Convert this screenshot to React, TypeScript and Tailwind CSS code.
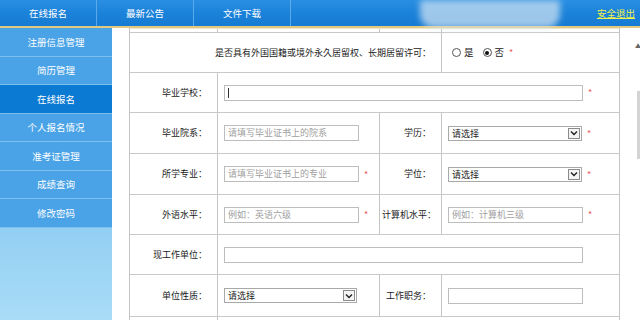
const navItems = ['在线报名', '最新公告', '文件下载']

const sideItems = ['注册信息管理', '简历管理', '在线报名', '个人报名情况', '准考证管理', '成绩查询', '修改密码']

function Star() {
  return <span className="ml-[5px] text-[9px] leading-none text-[#ee5a5c]">*</span>
}

function TextBox({ placeholder, width, star }: { placeholder?: string; width: string; star?: boolean }) {
  return (
    <div className="flex items-center">
      <div
        className={`${width} h-[16px] border border-[#bdbdbd] bg-white px-[3px] text-[9px] leading-[14px] text-[#a0a0a0]`}
      >
        {placeholder}
      </div>
      {star && <Star />}
    </div>
  )
}

function SelectBox({ width, star }: { width: string; star?: boolean }) {
  return (
    <div className="flex items-center">
      <div
        className={`${width} h-[15px] border border-[#a9a9a9] bg-white flex items-center justify-between pl-[3px] pr-[1px]`}
      >
        <span className="text-[9px] leading-none text-[#222]">请选择</span>
        <span className="w-[12px] h-[11px] border border-[#8a8a8a] bg-[#f4f4f4] flex items-center justify-center">
          <svg width="8" height="6" viewBox="0 0 8 6">
            <path d="M1 1.5 L4 4.5 L7 1.5" fill="none" stroke="#222" strokeWidth="1.4" />
          </svg>
        </span>
      </div>
      {star && <Star />}
    </div>
  )
}

function Label({ text }: { text: string }) {
  return (
    <div className="h-full flex items-center justify-end pr-[10px] text-[9px] text-[#1a1a1a] border-r border-[#c4c4c4]">
      {text}
    </div>
  )
}

function Radio({ checked }: { checked?: boolean }) {
  return (
    <span className="w-[9px] h-[9px] rounded-full border border-[#555] bg-white flex items-center justify-center">
      {checked && <span className="w-[4px] h-[4px] rounded-full bg-[#111]" />}
    </span>
  )
}

export default function App() {
  return (
    <div className="relative w-[640px] h-[322px] overflow-hidden bg-white font-['Noto_Sans_CJK_SC','Liberation_Sans',sans-serif]">
      {/* top bar */}
      <div className="h-[28px] flex bg-gradient-to-b from-[#2a8fe2] via-[#1b82da] to-[#167bd2] border-b-2 border-[#e3c980]">
        {navItems.map((item) => (
          <div
            key={item}
            className="w-[97px] h-full flex items-center justify-center text-[9.5px] text-white border-r border-[#5aa9ea]"
          >
            {item}
          </div>
        ))}
        <div className="flex-1" />
        <a className="self-center mr-[5px] text-[9.5px] text-[#eef24a] underline">安全退出</a>
      </div>

      {/* blurred overlay */}
      <div className="absolute left-[420px] top-[0px] w-[140px] h-[28px] rounded-b-[14px] bg-[#d6e6f2]/70 blur-[3px]" />

      <div className="flex h-[292px]">
        {/* sidebar */}
        <div className="w-[112px] flex flex-col bg-gradient-to-b from-[#5fb2ec] to-[#a9dcf6]">
          {sideItems.map((item, i) => (
            <div
              key={item}
              className={`h-[28.5px] flex items-center justify-center text-[9.5px] text-white border-b border-[#7cc0f0] ${
                i === 2 ? 'bg-[#0a7ad2]' : 'bg-[#4aa3e6]'
              }`}
            >
              {item}
            </div>
          ))}
        </div>

        <div className="w-[17px]" />

        {/* form table */}
        <div className="w-[491px] border-l border-r border-[#c4c4c4] flex flex-col">
          <div className="h-[5px] shrink-0 grid grid-cols-[88px_162px_62px_177px] border-t border-b border-[#c9c9c9] border-t-[#efe6c6]">
            <div className="border-r border-[#c4c4c4]" />
            <div className="border-r border-[#c4c4c4]" />
            <div className="border-r border-[#c4c4c4]" />
            <div />
          </div>

          <div className="h-[40px] shrink-0 grid grid-cols-[312px_177px] border-b border-[#c9c9c9]">
            <Label text="是否具有外国国籍或境外永久居留权、长期居留许可：" />
            <div className="flex items-center pl-[10px] text-[9.5px] text-[#222]">
              <Radio />
              <span className="ml-[3px]">是</span>
              <span className="ml-[9px]" />
              <Radio checked />
              <span className="ml-[3px]">否</span>
              <Star />
            </div>
          </div>

          <div className="h-[40px] shrink-0 grid grid-cols-[88px_401px] border-b border-[#c9c9c9]">
            <Label text="毕业学校：" />
            <div className="flex items-center pl-[6px]">
              <div className="w-[359px] h-[16px] border border-[#bdbdbd] bg-white flex items-center pl-[3px]">
                <span className="w-px h-[10px] bg-[#333]" />
              </div>
              <Star />
            </div>
          </div>

          <div className="h-[41px] shrink-0 grid grid-cols-[88px_162px_62px_177px] border-b border-[#c9c9c9]">
            <Label text="毕业院系：" />
            <div className="flex items-center pl-[6px] border-r border-[#c4c4c4]">
              <TextBox width="w-[135px]" placeholder="请填写毕业证书上的院系" />
            </div>
            <Label text="学历：" />
            <div className="flex items-center pl-[6px]">
              <SelectBox width="w-[134px]" star />
            </div>
          </div>

          <div className="h-[41px] shrink-0 grid grid-cols-[88px_162px_62px_177px] border-b border-[#c9c9c9]">
            <Label text="所学专业：" />
            <div className="flex items-center pl-[6px] border-r border-[#c4c4c4]">
              <TextBox width="w-[135px]" placeholder="请填写毕业证书上的专业" star />
            </div>
            <Label text="学位：" />
            <div className="flex items-center pl-[6px]">
              <SelectBox width="w-[134px]" star />
            </div>
          </div>

          <div className="h-[40px] shrink-0 grid grid-cols-[88px_162px_62px_177px] border-b border-[#c9c9c9]">
            <Label text="外语水平：" />
            <div className="flex items-center pl-[6px] border-r border-[#c4c4c4]">
              <TextBox width="w-[135px]" placeholder="例如：英语六级" star />
            </div>
            <div className="h-full flex items-center justify-end pr-[5px] text-[9px] text-[#1a1a1a] border-r border-[#c4c4c4]">
              计算机水平：
            </div>
            <div className="flex items-center pl-[6px]">
              <TextBox width="w-[135px]" placeholder="例如：计算机三级" star />
            </div>
          </div>

          <div className="h-[40px] shrink-0 grid grid-cols-[88px_401px] border-b border-[#c9c9c9]">
            <Label text="现工作单位：" />
            <div className="flex items-center pl-[6px]">
              <TextBox width="w-[359px]" />
            </div>
          </div>

          <div className="h-[42px] shrink-0 grid grid-cols-[88px_162px_62px_177px] border-b border-[#c9c9c9]">
            <Label text="单位性质：" />
            <div className="flex items-center pl-[6px] border-r border-[#c4c4c4]">
              <SelectBox width="w-[133px]" />
            </div>
            <Label text="工作职务：" />
            <div className="flex items-center pl-[6px]">
              <TextBox width="w-[135px]" />
            </div>
          </div>

          <div className="flex-1 grid grid-cols-[88px_162px_62px_177px]">
            <div className="border-r border-[#c4c4c4]" />
            <div />
            <div />
            <div />
          </div>
        </div>

        {/* scroll area */}
        <div className="flex-1 relative bg-white">
          <span className="absolute left-[15px] top-[13px] text-[6px] text-[#666]">▲</span>
          <div className="absolute right-0 top-[63px] w-[3px] h-[68px] bg-[#d4d4d4]" />
        </div>
      </div>
    </div>
  )
}
